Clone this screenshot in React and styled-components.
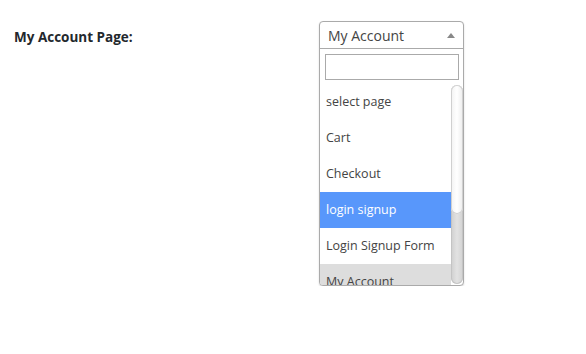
import React from 'react';
import styled, { createGlobalStyle } from 'styled-components';

const GlobalStyle = createGlobalStyle`
  body {
    margin: 0;
    background: #fff;
    font-family: "Open Sans", "DejaVu Sans", sans-serif;
    color: #23282d;
  }
`;

const Row = styled.div`
  display: flex;
  align-items: flex-start;
  padding: 21px 0 0 14px;
`;

const Label = styled.div`
  width: 305px;
  font-size: 13.5px;
  font-weight: 700;
  line-height: 18px;
  padding-top: 7px;
  color: #23282d;
`;

const Select = styled.div`
  width: 145px;
  box-sizing: border-box;
  border: 1px solid #aaa;
  border-radius: 4px;
  overflow: hidden;
  background: #fff;
  box-shadow: 0 1px 2px rgba(0, 0, 0, 0.15);
`;

const Header = styled.div`
  height: 26px;
  display: flex;
  align-items: center;
  justify-content: space-between;
  padding: 0 8px 0 8px;
  border-bottom: 1px solid #aaa;
  font-size: 14px;
  color: #444;
`;

const Arrow = styled.span`
  width: 0;
  height: 0;
  border-left: 4px solid transparent;
  border-right: 4px solid transparent;
  border-bottom: 5px solid #888;
`;

const SearchWrap = styled.div`
  padding: 5px 4px 4px 5px;
`;

const SearchInput = styled.div`
  height: 26px;
  box-sizing: border-box;
  border: 1px solid #aaa;
  background: #fff;
`;

const ListArea = styled.div`
  display: flex;
  height: 201px;
`;

const Options = styled.ul`
  list-style: none;
  margin: 0;
  padding: 0;
  flex: 1;
  overflow: hidden;
`;

const Option = styled.li`
  height: 36px;
  display: flex;
  align-items: center;
  padding: 0 6px 1px;
  box-sizing: border-box;
  font-size: 12.5px;
  color: ${p => (p.$active ? '#fff' : '#444')};
  background: ${p => (p.$active ? '#5897fb' : p.$selected ? '#ddd' : '#fff')};
`;

const Track = styled.div`
  width: 12px;
  margin: 1px 0 1px 0;
  border-radius: 6px;
  background: linear-gradient(to right, #cfcfcf, #e2e2e2 50%, #d2d2d2);
  box-shadow: inset 0 0 0 1px #c4c4c4;
`;

const Thumb = styled.div`
  height: 129px;
  border-radius: 6px;
  background: linear-gradient(to right, #f2f2f2, #fff 50%, #ececec);
  box-shadow: inset 0 0 0 1px #d0d0d0;
`;

const items = ['select page', 'Cart', 'Checkout', 'login signup', 'Login Signup Form', 'My Account'];

export default function App() {
  return (
    <>
      <GlobalStyle />
      <Row>
        <Label>My Account Page:</Label>
        <Select>
          <Header>
            <span>My Account</span>
            <Arrow />
          </Header>
          <SearchWrap>
            <SearchInput />
          </SearchWrap>
          <ListArea>
            <Options>
              {items.map(item => (
                <Option key={item} $active={item === 'login signup'} $selected={item === 'My Account'}>
                  {item}
                </Option>
              ))}
            </Options>
            <Track>
              <Thumb />
            </Track>
          </ListArea>
        </Select>
      </Row>
    </>
  );
}
